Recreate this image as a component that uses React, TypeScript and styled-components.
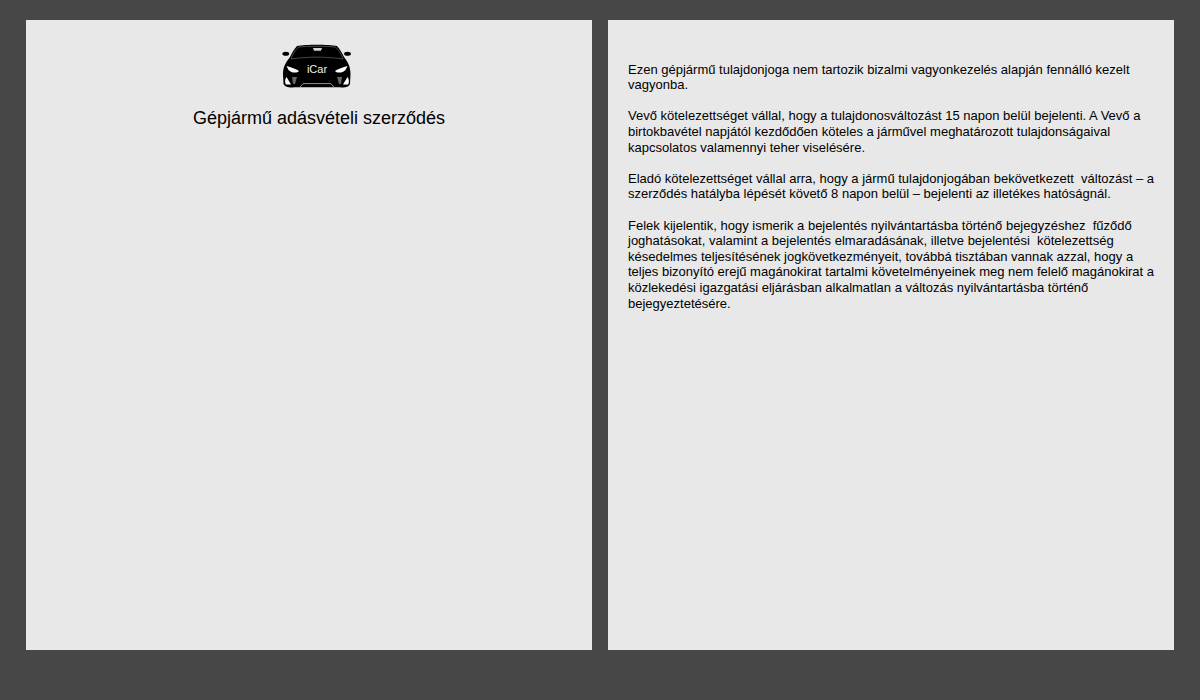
import React from "react";
import styled, { createGlobalStyle } from "styled-components";

const Global = createGlobalStyle`
  html, body { margin: 0; padding: 0; background: #474747; }
  body { font-family: "Liberation Sans", Arial, sans-serif; color: #000; }
`;

const Page = styled.main`
  width: 1200px;
  height: 700px;
  box-sizing: border-box;
  padding: 20px 26px 50px;
  display: grid;
  grid-template-columns: 566px 566px;
  column-gap: 16px;
  background: #474747;
  overflow: hidden;
`;

const Cover = styled.section`
  background: #e8e8e8;
  display: flex;
  flex-direction: column;
  align-items: center;
  padding: 24px 0 0 20px;
`;

const Logo = styled.svg`
  width: 70px;
  height: 46px;
  display: block;
  margin-right: 5px;
`;

const Title = styled.h1`
  margin: 18px 0 0;
  font-size: 18px;
  font-weight: 400;
  line-height: 21px;
`;

const Terms = styled.section`
  background: #e8e8e8;
  box-sizing: border-box;
  padding: 41.6px 18px 0 20px;
`;

const Paragraph = styled.p`
  margin: 0 0 15.6px;
  font-size: 13px;
  line-height: 15.6px;
  white-space: pre-wrap;
`;

const CarLogo = () => (
  <Logo viewBox="0 0 70 46" aria-hidden="true">
    <ellipse cx="3.8" cy="9.7" rx="3.4" ry="2" fill="#000" />
    <ellipse cx="65.5" cy="9.7" rx="3.4" ry="2" fill="#000" />
    <path
      fill="#000"
      d="M15 2 C24 0.4 46 0.4 55 2 C58 5 60 9 62 13 C66 18 68.5 23 68.5 30 L68 40 C66.5 43.5 62 44 58 43.2 L12 43.2 C8 44 3.5 43.5 1.5 40 L1 30 C1 23 4 18 8 13 C10 9 12 5 15 2 Z"
    />
    <path
      fill="none"
      stroke="#777"
      strokeWidth="0.6"
      d="M9 15 C11 9 14 5 17 3 C25 2 45 2 53 3 C56 5 59 9 61 15 C45 12.5 25 12.5 9 15 Z"
    />
    <path fill="#d4d4d4" d="M31 4 L40 4 L39 6.8 L32 6.8 Z" />
    <path fill="#fff" d="M4.5 22 C9 23 14 25 17 27 C15 29.5 9 29 6.5 26 Z" />
    <path fill="#fff" d="M65.5 22 C61 23 56 25 53 27 C55 29.5 61 29 63.5 26 Z" />
    <path fill="#fff" d="M4.5 33 L9 40.5 L3.8 40.5 C2.8 38 2.8 35 4.5 33 Z" />
    <path fill="#fff" d="M65.5 33 L61 40.5 L66.2 40.5 C67.2 38 67.2 35 65.5 33 Z" />
    <path fill="#666" d="M10 33 L15 33 L13 40 L11 40 Z" />
    <path fill="#666" d="M60 33 L55 33 L57 40 L59 40 Z" />
    <path fill="none" stroke="#b5b5b5" strokeWidth="0.8" d="M18 43.2 L21 39.6 L49 39.6 L52 43.2" />
    <text x="35" y="28.5" textAnchor="middle" fontFamily="Liberation Sans, sans-serif" fontSize="11" fill="#f2f2f2">
      iCar
    </text>
  </Logo>
);

const paragraphs = [
  "Ezen gépjármű tulajdonjoga nem tartozik bizalmi vagyonkezelés alapján fennálló kezelt vagyonba.",
  "Vevő kötelezettséget vállal, hogy a tulajdonosváltozást 15 napon belül bejelenti. A Vevő a birtokbavétel napjától kezdődően köteles a járművel meghatározott tulajdonságaival kapcsolatos valamennyi teher viselésére.",
  "Eladó kötelezettséget vállal arra, hogy a jármű tulajdonjogában bekövetkezett  változást – a szerződés hatályba lépését követő 8 napon belül – bejelenti az illetékes hatóságnál.",
  "Felek kijelentik, hogy ismerik a bejelentés nyilvántartásba történő bejegyzéshez  fűződő joghatásokat, valamint a bejelentés elmaradásának, illetve bejelentési  kötelezettség késedelmes teljesítésének jogkövetkezményeit, továbbá tisztában vannak azzal, hogy a teljes bizonyító erejű magánokirat tartalmi követelményeinek meg nem felelő magánokirat a közlekedési igazgatási eljárásban alkalmatlan a változás nyilvántartásba történő bejegyeztetésére.",
];

export default function App() {
  return (
    <>
      <Global />
      <Page>
        <Cover>
          <CarLogo />
          <Title>Gépjármű adásvételi szerződés</Title>
        </Cover>
        <Terms>
          {paragraphs.map((text) => (
            <Paragraph key={text.slice(0, 20)}>{text}</Paragraph>
          ))}
        </Terms>
      </Page>
    </>
  );
}
